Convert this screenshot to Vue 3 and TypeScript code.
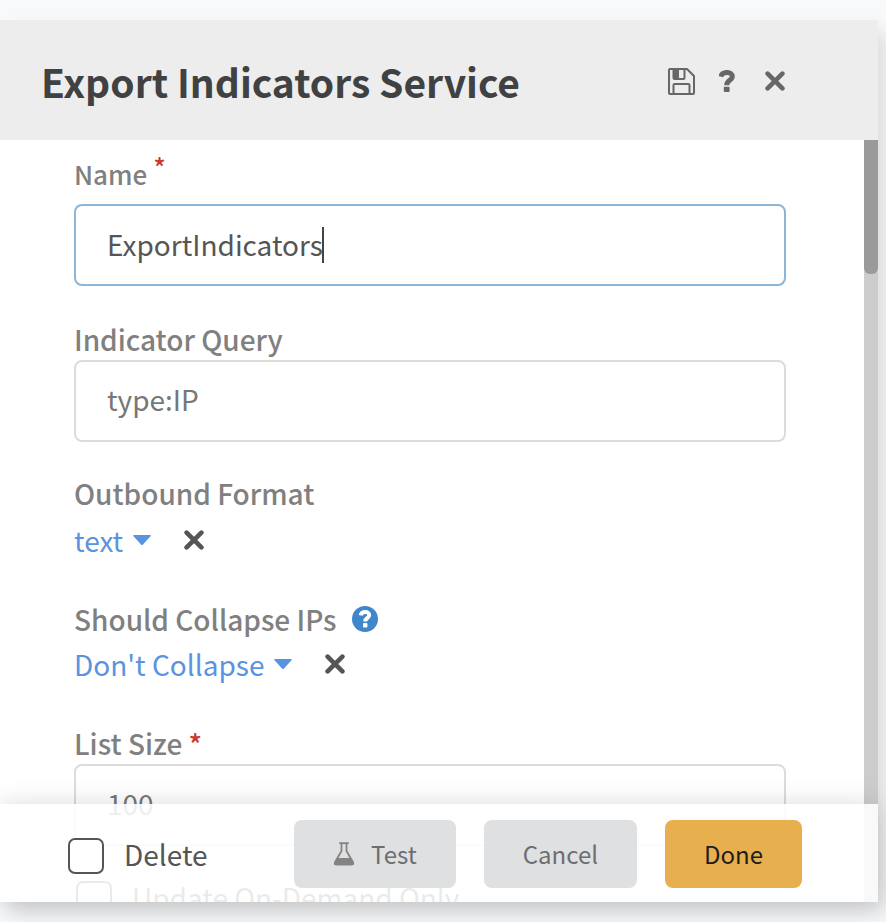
<script setup lang="ts">
import { ref } from 'vue'

const name = ref('ExportIndicators')
const query = ref('type:IP')
const format = ref('text')
const collapse = ref("Don't Collapse")
const listSize = ref('100')
const onDemand = ref(false)
const remove = ref(false)
</script>

<template>
  <main class="dialog">
    <header class="header">
      <h1 class="title">Export Indicators Service</h1>
      <div class="tools">
        <button type="button" class="icon-button" aria-label="Save">
          <svg class="save" viewBox="0 0 28 28" fill="none" stroke="#666767" stroke-width="2" stroke-linejoin="round">
            <path d="M2 3Q2 2 3 2H20L27 9V26Q27 27 26 27H3Q2 27 2 26Z" />
            <path d="M6.500 2V11Q6.500 12 7.500 12H16.500Q17.500 12 17.500 11V2M6.500 27V18Q6.500 17 7.500 17H21.500Q22.500 17 22.500 18V27" />
            <path d="M6.500 2H12V12H7.500L6.500 11Z" fill="#666767" stroke="none" />
          </svg>
        </button>
        <button type="button" class="icon-button" aria-label="Help">
          <svg class="help" viewBox="0 0 16 22">
            <path d="M1.800 6.600C3.200 1.200 13.300 1 13.300 6.600C13.300 10.500 7.700 10.300 7.700 15.200" fill="none" stroke="#666767" stroke-width="5" />
            <rect x="4.800" y="16.800" width="5.800" height="5.200" rx="1" fill="#666767" />
          </svg>
        </button>
        <button type="button" class="icon-button" aria-label="Close">
          <svg class="cross" viewBox="0 0 20 20" stroke="#666767" stroke-width="4.600" stroke-linecap="round">
            <path d="M2.600 2.600L17.400 17.400M17.400 2.600L2.600 17.400" />
          </svg>
        </button>
      </div>
    </header>

    <div class="body">
      <form class="fields" @submit.prevent>
        <div class="field field--name">
          <label class="label label--small" for="name">Name <span class="star star--raised">*</span></label>
          <div class="box box--active">
            <input id="name" v-model="name" class="live" type="text" size="16" />
            <span class="caret"></span>
          </div>
        </div>
        <div class="field">
          <label class="label" for="query">Indicator Query</label>
          <input id="query" v-model="query" class="box box--muted" type="text" />
        </div>
        <div class="field field--choice">
          <label class="label" for="format">Outbound Format</label>
          <div class="choice choice--spaced">
            <select id="format" v-model="format" class="select">
              <option>text</option>
            </select>
            <svg class="arrow" viewBox="0 0 18 10"><path d="M1 0H17Q18.500 0 17.500 1.200L10 9.400Q9 10.400 8 9.400L.5 1.200Q-.5 0 1 0Z" fill="#5a93e0" /></svg>
            <button type="button" class="icon-button clear" aria-label="Clear format">
              <svg class="cross" viewBox="0 0 20 20" stroke="#555" stroke-width="4.600" stroke-linecap="round">
                <path d="M2.600 2.600L17.400 17.400M17.400 2.600L2.600 17.400" />
              </svg>
            </button>
          </div>
        </div>
        <div class="field field--choice">
          <div class="label-row">
            <label class="label" for="collapse">Should Collapse IPs</label>
            <button type="button" class="icon-button" aria-label="About collapsing">
              <svg class="info" viewBox="0 0 26 26">
                <circle cx="13" cy="13" r="13" fill="#4086ca" />
                <path d="M8.600 9.400C9.600 5 17.200 4.800 17.200 9.200C17.200 12 13.200 11.900 13.200 15.600" fill="none" stroke="#fff" stroke-width="4" />
                <rect x="11" y="17" width="4.400" height="4.400" rx="1" fill="#fff" />
              </svg>
            </button>
          </div>
          <div class="choice">
            <select id="collapse" v-model="collapse" class="select">
              <option>Don't Collapse</option>
            </select>
            <svg class="arrow" viewBox="0 0 18 10"><path d="M1 0H17Q18.500 0 17.500 1.200L10 9.400Q9 10.400 8 9.400L.5 1.200Q-.5 0 1 0Z" fill="#5a93e0" /></svg>
            <button type="button" class="icon-button clear" aria-label="Clear collapse">
              <svg class="cross" viewBox="0 0 20 20" stroke="#555" stroke-width="4.600" stroke-linecap="round">
                <path d="M2.600 2.600L17.400 17.400M17.400 2.600L2.600 17.400" />
              </svg>
            </button>
          </div>
        </div>
        <div class="field">
          <label class="label" for="size">List Size <span class="star">*</span></label>
          <input id="size" v-model="listSize" class="box box--muted" type="text" />
        </div>
        <label class="check check--field">
          <input v-model="onDemand" type="checkbox" class="tick" />
          Update On-Demand Only
        </label>
      </form>
      <div class="track"><div class="thumb"></div></div>
    </div>

    <footer class="footer">
      <label class="check">
        <input v-model="remove" type="checkbox" class="tick" />
        Delete
      </label>
      <div class="actions">
        <button type="button" class="button">
          <svg class="flask" viewBox="0 0 22 24">
            <path d="M7 1.200H15M8.500 1.500V9L2 20.200Q1 22.600 3 22.600H19Q21 22.600 20 20.200L13.500 9V1.500" fill="none" stroke="#838383" stroke-width="1.800" stroke-linecap="round" />
            <path d="M4.800 16H17.200L20.500 21Q21 22.800 19 22.800H3Q1 22.800 1.500 21Z" fill="#838383" />
          </svg>
          Test
        </button>
        <button type="button" class="button">Cancel</button>
        <button type="button" class="button button--done">Done</button>
      </div>
    </footer>
  </main>
</template>

<style>
body {
  background: #f8f9fb;
}
</style>

<style scoped>
.dialog,
.dialog * {
  box-sizing: border-box;
}

.dialog {
  position: relative;
  display: flex;
  flex-direction: column;
  height: calc(100vh - 40px);
  margin: 20px 8px 20px 0;
  background: #fff;
  box-shadow: 8px 12px 20px rgba(0, 0, 0, 0.12);
  color: #555;
  font: 400 28px/40px "Noto Sans CJK SC", "Noto Sans", sans-serif;
}

input,
select,
button {
  font: inherit;
  color: inherit;
}

.header {
  display: flex;
  flex: none;
  align-items: center;
  justify-content: space-between;
  height: 120px;
  padding: 2px 93px 0 41px;
  background: #ededed;
}

.title {
  margin: 0;
  color: #404142;
  font-size: 39px;
  font-weight: 700;
  line-height: 60px;
}

.tools {
  display: flex;
  align-items: center;
  gap: 24px;
}

.icon-button {
  display: flex;
  padding: 0;
  border: 0;
  background: none;
}

.save {
  width: 28px;
  height: 28px;
}

.help {
  width: 16px;
  height: 22px;
}

.cross {
  width: 20px;
  height: 20px;
}

.tools .cross {
  margin-left: 6px;
}

.body {
  display: flex;
  flex: 1;
  min-height: 0;
  overflow: hidden;
}

.fields {
  display: flex;
  flex: 1;
  flex-direction: column;
  gap: 31px;
  min-width: 0;
  padding: 14px 78px 0 74px;
}

.field {
  display: flex;
  flex: none;
  flex-direction: column;
  gap: 1px;
}

.field--name {
  gap: 10px;
  padding-bottom: 2px;
}

.field--choice {
  gap: 5px;
  padding-bottom: 8px;
}

.label {
  color: #808080;
  font-weight: 500;
}

.label--small {
  font-size: 26px;
}

.label-row {
  display: flex;
  align-items: center;
  gap: 16px;
}

.star {
  color: #cb3a2f;
}

.star--raised {
  display: inline-block;
  line-height: 20px;
  vertical-align: 7px;
}

.box {
  display: flex;
  align-items: center;
  width: 100%;
  height: 82px;
  padding: 0 31px;
  border: 2px solid #dcdcdc;
  border-radius: 8px;
  background: #fff;
}

.box--active {
  border-color: #8cb6d7;
}

.box--muted {
  padding-bottom: 4px;
  color: #777;
}

.live {
  field-sizing: content;
  padding: 0 0 2px;
  border: 0;
  outline: 0;
  background: none;
}

.caret {
  width: 2px;
  height: 36px;
  margin-left: -1px;
  background: #444;
}

.choice {
  display: flex;
  align-items: center;
  height: 40px;
  color: #5a93e0;
}

.choice--spaced {
  margin-top: 2px;
}

.select {
  height: 40px;
  padding: 0;
  border: 0;
  appearance: none;
  background: none;
}

.arrow {
  width: 18px;
  height: 10px;
  margin-left: 9px;
}

.clear {
  margin-left: 33px;
}

.info {
  width: 26px;
  height: 26px;
}

.check {
  display: flex;
  align-items: center;
  gap: 20px;
  white-space: nowrap;
}

.check--field {
  flex: none;
  padding-left: 2px;
}

.tick {
  flex: none;
  width: 36px;
  height: 36px;
  margin: 4px 0 0;
  border: 2px solid #555;
  border-radius: 7px;
  appearance: none;
  background: #fff;
}

.track {
  flex: none;
  width: 14px;
  background: #ccc;
}

.thumb {
  height: 134px;
  border-radius: 0 0 6px 6px;
  background: #9a9a9a;
}

.footer {
  position: absolute;
  right: 0;
  bottom: 0;
  left: 0;
  display: flex;
  align-items: center;
  justify-content: space-between;
  height: 98px;
  padding: 2px 76px 0 68px;
  background: rgba(255, 255, 255, 0.88);
  box-shadow: 0 0 24px rgba(0, 0, 0, 0.14);
}

.actions {
  display: flex;
  gap: 28px;
}

.button {
  display: flex;
  align-items: center;
  justify-content: center;
  gap: 16px;
  height: 68px;
  padding: 0 39px;
  border: 0;
  border-radius: 8px;
  background: #dfe0e2;
  color: #6e6e6e;
  font-size: 24px;
}

.button--done {
  background: #e8af4e;
  color: #1d1d1b;
}

.flask {
  width: 22px;
  height: 24px;
}
</style>
